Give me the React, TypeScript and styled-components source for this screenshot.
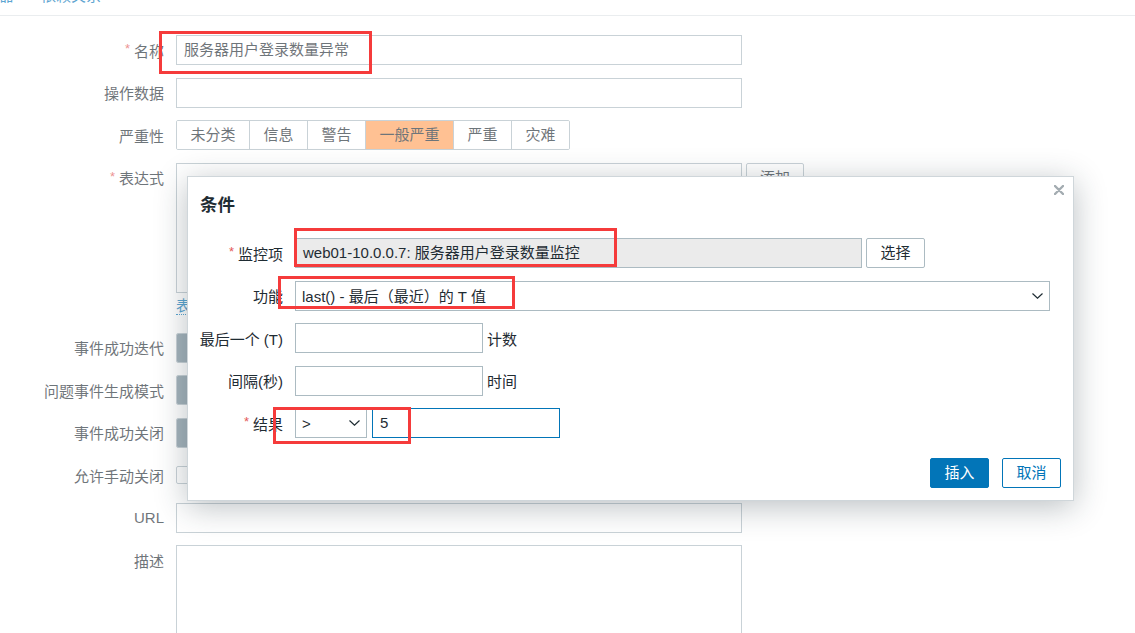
import React from "react";
import styled, { createGlobalStyle } from "styled-components";

const font = `"Liberation Sans", "Noto Sans CJK SC", sans-serif`;

const GlobalStyle = createGlobalStyle`
  html, body {
    margin: 0;
    padding: 0;
    background: #ffffff;
  }
  body {
    font-family: ${font};
    font-size: 15px;
    color: #1f2c33;
  }
  * {
    box-sizing: border-box;
  }
`;

const Page = styled.div`
  position: relative;
  width: 1135px;
  height: 633px;
  overflow: hidden;
  background: #ffffff;
`;

/* ---------- background form ---------- */

const TabBar = styled.div`
  display: flex;
  align-items: flex-end;
  gap: 27px;
  height: 16px;
  margin-left: -31px;
  border-bottom: 1px solid #dfe4e7;
`;

const Tab = styled.span`
  line-height: 18px;
  margin-bottom: 10px;
  color: #0275b8;
  white-space: nowrap;
`;

const Form = styled.div`
  display: grid;
  grid-template-columns: 164px 566px;
  column-gap: 12px;
  row-gap: 12.5px;
  margin-top: 19px;
`;

const Label = styled.div<{ $required?: boolean; $top?: boolean }>`
  height: 30px;
  display: flex;
  align-items: center;
  justify-content: flex-end;
  white-space: nowrap;
  color: #1f2c33;
  align-self: ${(p) => (p.$top ? "start" : "center")};

  &::before {
    content: ${(p) => (p.$required ? '"*"' : "none")};
    color: #e45959;
    margin-right: 4px;
    font-size: 13px;
    line-height: 1;
    margin-top: -3px;
  }
`;

const Field = styled.div`
  display: flex;
  align-items: flex-start;
  gap: 4px;
  min-width: 0;
`;

const Stack = styled.div`
  display: flex;
  flex-direction: column;
`;

const Input = styled.div<{ $w?: number; $readonly?: boolean; $focus?: boolean }>`
  width: ${(p) => (p.$w ? `${p.$w}px` : "100%")};
  height: 30px;
  flex-shrink: 0;
  border: 1px solid ${(p) => (p.$focus ? "#0275b8" : "#acbbc2")};
  background: ${(p) => (p.$readonly ? "#ebebeb" : "#ffffff")};
  padding: 0 7px;
  line-height: 28px;
  white-space: nowrap;
  overflow: hidden;
  color: #1f2c33;
`;

const TextArea = styled.div<{ $h: number; $w?: number }>`
  width: ${(p) => (p.$w ? `${p.$w}px` : "100%")};
  height: ${(p) => p.$h}px;
  border: 1px solid #acbbc2;
  background: #ffffff;
`;

const SegGroup = styled.div`
  display: flex;
  height: 30px;
  border: 1px solid #acbbc2;
  border-radius: 2px;
  overflow: hidden;
`;

const Seg = styled.div<{ $active?: boolean; $bg?: string; $fg?: string }>`
  padding: 0 13.5px;
  line-height: 28px;
  white-space: nowrap;
  background: ${(p) => (p.$active ? p.$bg ?? "#768d99" : "#ffffff")};
  color: ${(p) => (p.$active ? p.$fg ?? "#ffffff" : "#1f2c33")};
  border-right: 1px solid #acbbc2;

  &:last-child {
    border-right: none;
  }
`;

const Button = styled.div<{ $primary?: boolean; $w?: number; $tone?: "blue" | "grey" }>`
  width: ${(p) => (p.$w ? `${p.$w}px` : "auto")};
  height: 30px;
  flex-shrink: 0;
  border-radius: 2px;
  border: 1px solid ${(p) => (p.$tone === "blue" || p.$primary ? "#0275b8" : "#acbbc2")};
  background: ${(p) => (p.$primary ? "#0275b8" : "#ffffff")};
  color: ${(p) => (p.$primary ? "#ffffff" : p.$tone === "blue" ? "#0275b8" : "#1f2c33")};
  text-align: center;
  line-height: 28px;
  white-space: nowrap;
`;

const LinkLine = styled.div`
  height: 27.5px;
  display: flex;
  align-items: center;
`;

const Link = styled.span`
  color: #0275b8;
  border-bottom: 1px dotted #0275b8;
  line-height: 17px;
`;

const Check = styled.div`
  width: 18px;
  height: 18px;
  border: 1px solid #acbbc2;
  border-radius: 2px;
  background: #ffffff;
  align-self: center;
`;

const Dim = styled.div`
  position: absolute;
  inset: 0;
  background: rgba(255, 255, 255, 0.35);
`;

/* ---------- dialog ---------- */

const Dialog = styled.div`
  position: absolute;
  left: 187px;
  top: 176px;
  width: 887px;
  height: 325px;
  display: flex;
  flex-direction: column;
  background: #ffffff;
  border: 1px solid #cfd6da;
  box-shadow: 0 6px 30px rgba(30, 45, 55, 0.3);
`;

const Close = styled.div`
  position: absolute;
  right: 9px;
  top: 8px;
  width: 10px;
  height: 10px;
  color: #a3acb1;
  display: flex;
`;

const Title = styled.h4`
  margin: 0;
  padding: 14px 12px 0;
  height: 61px;
  font-size: 17.5px;
  font-weight: bold;
  line-height: 28px;
  color: #1f2c33;
`;

const DialogForm = styled.div`
  display: grid;
  grid-template-columns: 83px 1fr;
  column-gap: 12px;
  row-gap: 12.5px;
  padding: 0 12px;
`;

const DField = styled.div`
  display: flex;
  align-items: center;
  gap: 5px;
`;

const Unit = styled.span`
  margin-left: -1px;
`;

const Select = styled.div<{ $w: number }>`
  width: ${(p) => p.$w}px;
  height: 30px;
  flex-shrink: 0;
  border: 1px solid #acbbc2;
  background: #ffffff;
  padding: 0 6px;
  display: flex;
  align-items: center;
  justify-content: space-between;
  white-space: nowrap;
  color: #1f2c33;
`;

const Footer = styled.div`
  margin-top: auto;
  display: flex;
  justify-content: flex-end;
  gap: 13px;
  padding: 0 12px 12px;
`;

const Mark = styled.div`
  position: absolute;
  border: 3px solid #f53b3b;
`;

const Chevron = () => (
  <svg width="11" height="6" viewBox="0 0 11 6" fill="none">
    <path d="M0.5 0.5 L5.5 5.2 L10.5 0.5" stroke="#1f2c33" strokeWidth="1.2" />
  </svg>
);

const CloseIcon = () => (
  <svg width="10" height="10" viewBox="0 0 10 10">
    <path d="M1 1 L9 9 M9 1 L1 9" stroke="currentColor" strokeWidth="2.4" strokeLinecap="round" />
  </svg>
);

const severities = ["未分类", "信息", "警告", "一般严重", "严重", "灾难"];

export default function App() {
  return (
    <>
      <GlobalStyle />
      <Page>
        <TabBar>
          <Tab>触发器</Tab>
          <Tab>依赖关系</Tab>
        </TabBar>

        <Form>
          <Label $required>名称</Label>
          <Field>
            <Input>服务器用户登录数量异常</Input>
          </Field>

          <Label>操作数据</Label>
          <Field>
            <Input />
          </Field>

          <Label>严重性</Label>
          <Field>
            <SegGroup>
              {severities.map((s) => (
                <Seg key={s} $active={s === "一般严重"} $bg="#ffa059" $fg="#1f2c33">
                  {s}
                </Seg>
              ))}
            </SegGroup>
          </Field>

          <Label $required $top>
            表达式
          </Label>
          <Field>
            <Stack>
              <TextArea $h={130} $w={566} />
              <LinkLine>
                <Link>表达式构造器</Link>
              </LinkLine>
            </Stack>
            <Button $w={58}>添加</Button>
          </Field>

          <Label>事件成功迭代</Label>
          <Field>
            <SegGroup>
              <Seg $active>表达式</Seg>
              <Seg>恢复表达式</Seg>
              <Seg>无</Seg>
            </SegGroup>
          </Field>

          <Label>问题事件生成模式</Label>
          <Field>
            <SegGroup>
              <Seg $active>单个</Seg>
              <Seg>多重</Seg>
            </SegGroup>
          </Field>

          <Label>事件成功关闭</Label>
          <Field>
            <SegGroup>
              <Seg $active>所有问题</Seg>
              <Seg>所有问题如果标签值匹配</Seg>
            </SegGroup>
          </Field>

          <Label>允许手动关闭</Label>
          <Field>
            <Check />
          </Field>

          <Label>URL</Label>
          <Field>
            <Input />
          </Field>

          <Label $top>描述</Label>
          <Field>
            <TextArea $h={150} />
          </Field>
        </Form>

        <Dim />

        <Dialog>
          <Close>
            <CloseIcon />
          </Close>
          <Title>条件</Title>
          <DialogForm>
            <Label $required>监控项</Label>
            <Field>
              <Input $w={567} $readonly>
                web01-10.0.0.7: 服务器用户登录数量监控
              </Input>
              <Button $w={59}>选择</Button>
            </Field>

            <Label>功能</Label>
            <DField>
              <Select $w={755}>
                <span>last() - 最后（最近）的 T 值</span>
                <Chevron />
              </Select>
            </DField>

            <Label>最后一个 (T)</Label>
            <DField>
              <Input $w={188} />
              <Unit>计数</Unit>
            </DField>

            <Label>间隔(秒)</Label>
            <DField>
              <Input $w={188} />
              <Unit>时间</Unit>
            </DField>

            <Label $required>结果</Label>
            <DField>
              <Select $w={72}>
                <span>&gt;</span>
                <Chevron />
              </Select>
              <Input $w={188} $focus>
                5
              </Input>
            </DField>
          </DialogForm>
          <Footer>
            <Button $primary $w={59}>
              插入
            </Button>
            <Button $tone="blue" $w={59}>
              取消
            </Button>
          </Footer>
        </Dialog>

        <Mark style={{ left: 159, top: 31, width: 213, height: 43 }} />
        <Mark style={{ left: 294, top: 228, width: 323, height: 39 }} />
        <Mark style={{ left: 278, top: 276, width: 237, height: 33 }} />
        <Mark style={{ left: 273, top: 407, width: 138, height: 37 }} />
      </Page>
    </>
  );
}
